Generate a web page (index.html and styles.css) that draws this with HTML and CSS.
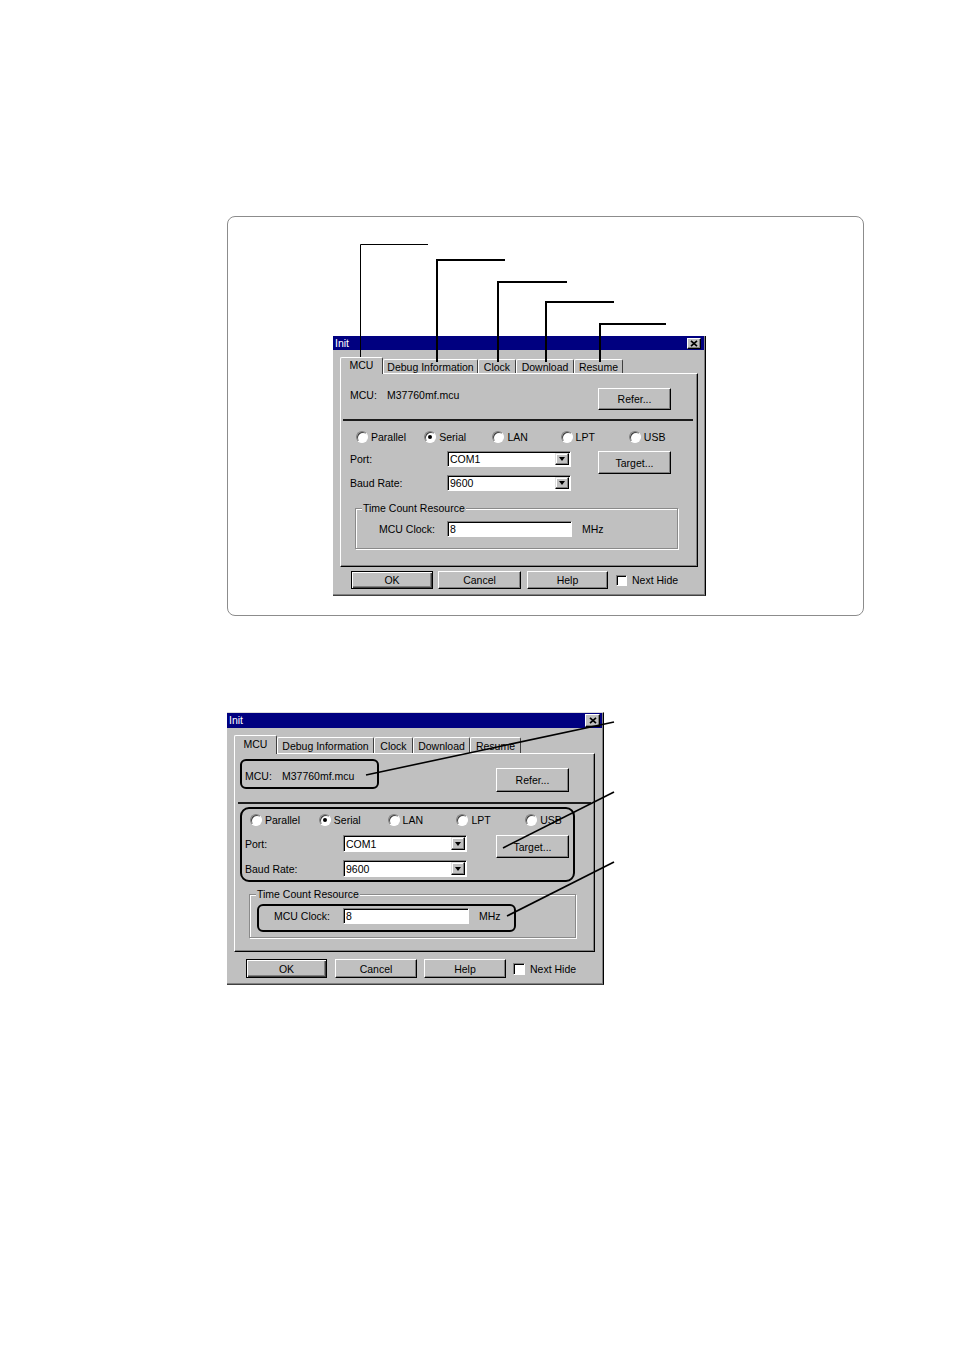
FILE: index.html
```html
<!DOCTYPE html>
<html>
<head>
<meta charset="utf-8">
<title>Init</title>
<link rel="stylesheet" href="styles.css">
</head>
<body>
<div class="page">
  <div class="frame">
    <div class="dlg d1">
      <div class="titlebar"><span class="ttl">Init</span><span class="xbtn"><svg viewBox="0 0 8 7" class="xicon"><path d="M1 0.8L7 6.2M7 0.8L1 6.2" stroke="#000" stroke-width="1.7" fill="none"/></svg></span></div>
      <div class="tabs">
        <div class="tab sel t1">MCU</div>
        <div class="tab t2">Debug Information</div>
        <div class="tab t3">Clock</div>
        <div class="tab t4">Download</div>
        <div class="tab t5">Resume</div>
      </div>
      <div class="panel">
        <div class="mcurow"><span class="mlbl">MCU:</span><span class="mval">M37760mf.mcu</span><div class="btn refer">Refer...</div></div>
        <div class="sep"></div>
        <div class="radios">
          <div class="radio"><span class="rdot"></span>Parallel</div>
          <div class="radio on"><span class="rdot"></span>Serial</div>
          <div class="radio"><span class="rdot"></span>LAN</div>
          <div class="radio"><span class="rdot"></span>LPT</div>
          <div class="radio"><span class="rdot"></span>USB</div>
        </div>
        <div class="conn">
          <div class="fields">
            <div class="frow"><span class="flbl">Port:</span><div class="combo"><span class="cval">COM1</span><span class="carrow"></span></div></div>
            <div class="frow"><span class="flbl">Baud Rate:</span><div class="combo"><span class="cval">9600</span><span class="carrow"></span></div></div>
          </div>
          <div class="btn target">Target...</div>
        </div>
        <div class="group">
          <span class="legend">Time Count Resource</span>
          <div class="clk"><span class="clbl">MCU Clock:</span><div class="edit">8</div><span class="unit">MHz</span></div>
        </div>
      </div>
      <div class="footer">
        <div class="btn ok">OK</div>
        <div class="btn cancel">Cancel</div>
        <div class="btn help">Help</div>
        <span class="chk"></span><span class="chklbl">Next Hide</span>
      </div>
    </div>
    <svg class="callouts" width="637" height="400" viewBox="0 0 637 400">
      <polyline points="201,28.5 133.5,28.5 133.5,146" fill="none" stroke="#000" stroke-width="1"/>
      <polyline points="278,44 210,44 210,146" fill="none" stroke="#000" stroke-width="2"/>
      <polyline points="340,66 271,66 271,146" fill="none" stroke="#000" stroke-width="2"/>
      <polyline points="387,86 319,86 319,146" fill="none" stroke="#000" stroke-width="2"/>
      <polyline points="439,108 373,108 373,146" fill="none" stroke="#000" stroke-width="2"/>
    </svg>
  </div>

  <div class="fig2">
    <div class="dlg d2">
      <div class="titlebar"><span class="ttl">Init</span><span class="xbtn"><svg viewBox="0 0 8 7" class="xicon"><path d="M1 0.8L7 6.2M7 0.8L1 6.2" stroke="#000" stroke-width="1.7" fill="none"/></svg></span></div>
      <div class="tabs">
        <div class="tab sel t1">MCU</div>
        <div class="tab t2">Debug Information</div>
        <div class="tab t3">Clock</div>
        <div class="tab t4">Download</div>
        <div class="tab t5">Resume</div>
      </div>
      <div class="panel">
        <div class="mcurow"><span class="mlbl">MCU:</span><span class="mval">M37760mf.mcu</span><div class="btn refer">Refer...</div></div>
        <div class="sep"></div>
        <div class="radios">
          <div class="radio"><span class="rdot"></span>Parallel</div>
          <div class="radio on"><span class="rdot"></span>Serial</div>
          <div class="radio"><span class="rdot"></span>LAN</div>
          <div class="radio"><span class="rdot"></span>LPT</div>
          <div class="radio"><span class="rdot"></span>USB</div>
        </div>
        <div class="conn">
          <div class="fields">
            <div class="frow"><span class="flbl">Port:</span><div class="combo"><span class="cval">COM1</span><span class="carrow"></span></div></div>
            <div class="frow"><span class="flbl">Baud Rate:</span><div class="combo"><span class="cval">9600</span><span class="carrow"></span></div></div>
          </div>
          <div class="btn target">Target...</div>
        </div>
        <div class="group">
          <span class="legend">Time Count Resource</span>
          <div class="clk"><span class="clbl">MCU Clock:</span><div class="edit">8</div><span class="unit">MHz</span></div>
        </div>
      </div>
      <div class="footer">
        <div class="btn ok">OK</div>
        <div class="btn cancel">Cancel</div>
        <div class="btn help">Help</div>
        <span class="chk"></span><span class="chklbl">Next Hide</span>
      </div>
    </div>
    <svg class="marks" width="400" height="280" viewBox="0 0 400 280">
      <rect x="14" y="48" width="137" height="28" rx="5" fill="none" stroke="#000" stroke-width="2"/>
      <rect x="14" y="96" width="333" height="73" rx="8" fill="none" stroke="#000" stroke-width="2"/>
      <rect x="31" y="193" width="257" height="26" rx="5" fill="none" stroke="#000" stroke-width="2"/>
      <line x1="139" y1="63" x2="387" y2="10" stroke="#000" stroke-width="1.6"/>
      <line x1="276" y1="136" x2="387" y2="80" stroke="#000" stroke-width="1.6"/>
      <line x1="280" y1="204" x2="387" y2="150" stroke="#000" stroke-width="1.6"/>
    </svg>
  </div>
</div>
</body>
</html>
```

FILE: styles.css
```css
* { box-sizing: border-box; }

html, body {
  margin: 0;
  padding: 0;
  background: #fff;
}

body {
  width: 954px;
  height: 1351px;
  overflow: hidden;
  font-family: "Liberation Sans", Arial, sans-serif;
  font-size: 10.5px;
  color: #000;
}

.page {
  padding: 216px 0 0 227px;
}

/* ---------- figure frames ---------- */
.frame {
  position: relative;
  width: 637px;
  height: 400px;
  border: 1px solid #8c8c8c;
  border-radius: 8px;
  padding: 119px 0 0 105px;
}

.callouts {
  position: absolute;
  top: -1px;
  left: -1px;
  pointer-events: none;
}

.fig2 {
  position: relative;
  margin-top: 96px;
  width: 400px;
}

.marks {
  position: absolute;
  top: 0;
  left: 0;
  pointer-events: none;
}

/* ---------- dialog sizing variables ---------- */
.d1 {
  --w: 373px; --h: 260px; --th: 14px; --bt: 0px;
  --xw: 14px; --xh: 11px; --xmr: 3px;
  --tabs-mt: 7px; --tabh: 14px;
  --t1: 43px; --t2: 95px; --t3: 38px; --t4: 58px; --t5: 49px;
  --pw: 358px; --ph: 194px;
  --r1h: 22px; --r1tm: 0px; --mpl: 9px; --mlw: 37px; --mvw: 211px;
  --sep-mt: 9px; --sep-ml: 2px; --sep-mr: 4px;
  --rad-mt: 9px; --radw: 68.5px;
  --conn-mt: 7px; --fpl: 9px; --flw: 97px; --ch: 16px; --cgap: 8px; --cw: 124px; --aw: 14px;
  --tml: 27px; --tgh: 23px;
  --grp-mt: 17px; --grp-ml: 14px; --grp-w: 323px; --grp-h: 41px;
  --clk-mt: 7px; --clk-pl: 23px; --clw: 68px; --ew: 125px;
  --ft-mt: 4px; --ft-pl: 18px; --bh: 18px;
  --okw: 82px; --caw: 83px; --caml: 5px; --hew: 81px; --heml: 6px;
  --chk: 11px; --chkml: 8px;
}

.d2 {
  --w: 377px; --h: 273px; --th: 15px; --bt: 1px;
  --xw: 15px; --xh: 13px; --xmr: 2px;
  --tabs-mt: 7px; --tabh: 16px;
  --t1: 43px; --t2: 97px; --t3: 39px; --t4: 57px; --t5: 51px;
  --pw: 361px; --ph: 199px;
  --r1h: 24px; --r1tm: 1px; --mpl: 10px; --mlw: 37px; --mvw: 214px;
  --sep-mt: 10px; --sep-ml: 3px; --sep-mr: 3px;
  --rad-mt: 9px; --radw: 69px;
  --conn-mt: 8px; --fpl: 10px; --flw: 98px; --ch: 17px; --cgap: 8px; --cw: 124px; --aw: 14px;
  --tml: 29px; --tgh: 23px;
  --grp-mt: 17px; --grp-ml: 14px; --grp-w: 327px; --grp-h: 44px;
  --clk-mt: 8px; --clk-pl: 24px; --clw: 69px; --ew: 126px;
  --ft-mt: 7px; --ft-pl: 19px; --bh: 19px;
  --okw: 81px; --caw: 82px; --caml: 8px; --hew: 82px; --heml: 7px;
  --chk: 12px; --chkml: 7px;
}

/* ---------- dialog ---------- */
.dlg {
  width: var(--w);
  height: var(--h);
  background: #c0c0c0;
  border-top: var(--bt) solid #dcdcdc;
  border-right: 1px solid #000;
  border-bottom: 1px solid #404040;
  box-shadow: inset -1px -1px 0 #808080;
  display: flex;
  flex-direction: column;
}

.titlebar {
  height: var(--th);
  margin-right: 1px;
  background: #000080;
  color: #fff;
  display: flex;
  align-items: center;
  padding-left: 2px;
  flex: none;
}

.ttl {
  line-height: 1;
  font-size: 10.5px;
}

.xbtn {
  margin-left: auto;
  margin-right: var(--xmr);
  width: var(--xw);
  height: var(--xh);
  background: #c0c0c0;
  border: 1px solid;
  border-color: #fff #000 #000 #fff;
  box-shadow: inset -1px -1px 0 #808080;
  display: flex;
  align-items: center;
  justify-content: center;
}

.xicon {
  width: 8px;
  height: 7px;
  display: block;
}

/* tabs */
.tabs {
  display: flex;
  align-items: flex-end;
  margin-top: var(--tabs-mt);
  padding-left: 7px;
  flex: none;
}

.tab {
  height: var(--tabh);
  border-top: 1px solid #fff;
  border-left: 1px solid #fff;
  border-right: 1px solid #404040;
  border-radius: 2px 2px 0 0;
  display: flex;
  align-items: center;
  justify-content: center;
  white-space: nowrap;
  line-height: 12px;
}

.tab.sel {
  position: relative;
  z-index: 1;
  height: calc(var(--tabh) + 3px);
  margin-bottom: -1px;
  background: #c0c0c0;
  padding-bottom: 2px;
}

.t1 { width: var(--t1); }
.t2 { width: var(--t2); }
.t3 { width: var(--t3); }
.t4 { width: var(--t4); }
.t5 { width: var(--t5); }

/* panel */
.panel {
  margin-left: 7px;
  width: var(--pw);
  height: var(--ph);
  border: 1px solid;
  border-color: #fff #000 #000 #fff;
  box-shadow: inset -1px -1px 0 #808080;
  display: flex;
  flex-direction: column;
  flex: none;
}

.mcurow {
  display: flex;
  align-items: flex-start;
  margin-top: 14px;
  height: var(--r1h);
  padding-left: var(--mpl);
}

.mlbl, .mval {
  line-height: 14px;
  margin-top: var(--r1tm);
  white-space: nowrap;
}

.mlbl { width: var(--mlw); }
.mval { width: var(--mvw); }

.sep {
  margin: var(--sep-mt) var(--sep-mr) 0 var(--sep-ml);
  height: 2px;
  background: #1c1c1c;
  flex: none;
}

.radios {
  display: flex;
  margin-top: var(--rad-mt);
  padding-left: 15px;
  height: 14px;
}

.radio {
  width: var(--radw);
  display: flex;
  align-items: center;
  white-space: nowrap;
  line-height: 14px;
}

.rdot {
  width: 12px;
  height: 12px;
  margin-right: 3px;
  border-radius: 50%;
  background: #fff;
  border: 1px solid;
  border-color: #808080 #fff #fff #808080;
  box-shadow: inset 1px 1px 0 #404040;
  display: flex;
  align-items: center;
  justify-content: center;
  flex: none;
}

.radio.on .rdot::after {
  content: "";
  width: 4px;
  height: 4px;
  border-radius: 50%;
  background: #000;
}

.conn {
  display: flex;
  align-items: flex-start;
  margin-top: var(--conn-mt);
}

.fields {
  display: flex;
  flex-direction: column;
  gap: var(--cgap);
  padding-left: var(--fpl);
}

.frow {
  display: flex;
  align-items: center;
  height: var(--ch);
}

.flbl {
  width: var(--flw);
  white-space: nowrap;
}

.combo, .edit {
  background: #fff;
  border: 1px solid;
  border-color: #808080 #fff #fff #808080;
  box-shadow: inset 1px 1px 0 #000;
}

.combo {
  width: var(--cw);
  height: var(--ch);
  display: flex;
  align-items: center;
  padding-left: 2px;
}

.cval {
  flex: 1;
  line-height: 12px;
}

.carrow {
  width: var(--aw);
  height: calc(var(--ch) - 4px);
  margin-right: 1px;
  background: #c0c0c0;
  border: 1px solid;
  border-color: #dfdfdf #000 #000 #dfdfdf;
  box-shadow: inset -1px -1px 0 #808080, inset 1px 1px 0 #fff;
  display: flex;
  align-items: center;
  justify-content: center;
}

.carrow::after {
  content: "";
  border-left: 3.5px solid transparent;
  border-right: 3.5px solid transparent;
  border-top: 4px solid #000;
}

/* buttons */
.btn {
  background: #c0c0c0;
  border: 1px solid;
  border-color: #fff #000 #000 #fff;
  box-shadow: inset -1px -1px 0 #808080;
  display: flex;
  align-items: center;
  justify-content: center;
  white-space: nowrap;
  flex: none;
}

.refer {
  width: 73px;
  height: var(--r1h);
}

.target {
  margin-left: var(--tml);
  width: 73px;
  height: var(--tgh);
}

.btn.ok {
  border: 1px solid #000;
  box-shadow: inset 1px 1px 0 #fff, inset -1px -1px 0 #404040, inset -2px -2px 0 #808080;
}

/* group box */
.group {
  margin-top: var(--grp-mt);
  margin-left: var(--grp-ml);
  width: var(--grp-w);
  height: var(--grp-h);
  border: 1px solid #8a8a8a;
  box-shadow: 1px 1px 0 #fff, inset 1px 1px 0 #fff;
  flex: none;
}

.legend {
  display: block;
  width: max-content;
  margin: -7px 0 0 6px;
  padding: 0 1px;
  line-height: 12px;
  background: #c0c0c0;
}

.clk {
  display: flex;
  align-items: center;
  margin-top: var(--clk-mt);
  padding-left: var(--clk-pl);
  height: 16px;
}

.clbl {
  width: var(--clw);
  white-space: nowrap;
}

.edit {
  width: var(--ew);
  height: 16px;
  padding-left: 2px;
  line-height: 14px;
}

.unit {
  margin-left: 10px;
}

/* footer */
.footer {
  display: flex;
  align-items: center;
  margin-top: var(--ft-mt);
  padding-left: var(--ft-pl);
}

.footer .btn { height: var(--bh); }
.ok { width: var(--okw); }
.cancel { width: var(--caw); margin-left: var(--caml); }
.help { width: var(--hew); margin-left: var(--heml); }

.chk {
  width: var(--chk);
  height: var(--chk);
  margin-left: var(--chkml);
  background: #fff;
  border: 1px solid;
  border-color: #808080 #fff #fff #808080;
  box-shadow: inset 1px 1px 0 #000;
  flex: none;
}

.chklbl {
  margin-left: 5px;
  white-space: nowrap;
}
```
